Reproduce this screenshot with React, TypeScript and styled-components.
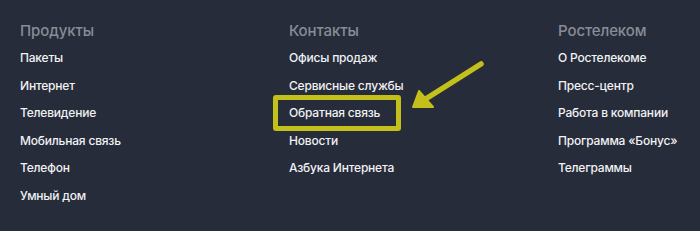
import styled, { createGlobalStyle } from 'styled-components';

const GlobalStyle = createGlobalStyle`
	html, body {
		margin: 0;
		padding: 0;
		background: #272c3a;
	}
	body {
		font-family: Inter, Roboto, "Noto Sans", sans-serif;
	}
`;

const Footer = styled.div`
	position: relative;
	width: 700px;
	height: 231px;
	box-sizing: border-box;
	padding: 21px 0 0 20px;
	background: #272c3a;
	display: grid;
	grid-template-columns: 269px 269px 1fr;
	overflow: hidden;
`;

const Column = styled.div`
	display: flex;
	flex-direction: column;
`;

const Heading = styled.div`
	font-size: 15px;
	line-height: 20px;
	font-weight: 500;
	color: #878c97;
	margin-bottom: 9px;
	letter-spacing: -0.1px;
`;

const List = styled.div`
	display: flex;
	flex-direction: column;
	gap: 11.5px;
`;

const Item = styled.div`
	position: relative;
	width: fit-content;
	font-size: 12px;
	line-height: 16px;
	font-weight: 500;
	color: #f1f2f4;
	letter-spacing: -0.2px;
`;

const Highlight = styled.span`
	position: absolute;
	top: -10px;
	bottom: -10px;
	left: -16px;
	right: -21px;
	border: 5px solid #c4c01b;
	border-radius: 3px;
	pointer-events: none;
`;

const Arrow = styled.svg`
	position: absolute;
	left: 0;
	top: 0;
	pointer-events: none;
`;

const columns = [
	{
		title: 'Продукты',
		items: ['Пакеты', 'Интернет', 'Телевидение', 'Мобильная связь', 'Телефон', 'Умный дом'],
	},
	{
		title: 'Контакты',
		items: ['Офисы продаж', 'Сервисные службы', 'Обратная связь', 'Новости', 'Азбука Интернета'],
	},
	{
		title: 'Ростелеком',
		items: ['О Ростелекоме', 'Пресс-центр', 'Работа в компании', 'Программа «Бонус»', 'Телеграммы'],
	},
];

const App = () => {
	return (
		<>
			<GlobalStyle />
			<Footer>
				{columns.map((col) => (
					<Column key={col.title}>
						<Heading>{col.title}</Heading>
						<List>
							{col.items.map((item) => (
								<Item key={item}>
									{item}
									{item === 'Обратная связь' && <Highlight />}
								</Item>
							))}
						</List>
					</Column>
				))}
				<Arrow width="700" height="231" viewBox="0 0 700 231">
					<line x1="481" y1="64" x2="424" y2="100" stroke="#c4c01b" strokeWidth="5.5" strokeLinecap="round" />
					<polygon points="413,107 419,91 433,107" fill="#c4c01b" stroke="#c4c01b" strokeWidth="2" strokeLinejoin="round" />
				</Arrow>
			</Footer>
		</>
	);
};

export default App;
